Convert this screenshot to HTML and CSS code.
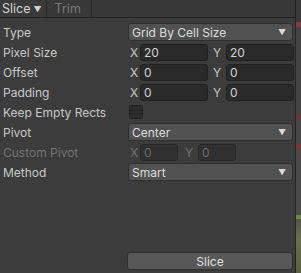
FILE: index.html
```html
<!DOCTYPE html>
<html>
<head>
<meta charset="utf-8">
<link rel="stylesheet" href="styles.css">
</head>
<body>
<div class="window">
  <div class="panel">
    <div class="toolbar">
      <div class="tab active">Slice <span class="caret">▼</span></div>
      <div class="tab disabled">Trim</div>
    </div>
    <div class="content">
      <div class="row">
        <div class="label">Type</div>
        <div class="dropdown"><span>Grid By Cell Size</span><span class="arrow">▼</span></div>
      </div>
      <div class="row">
        <div class="label">Pixel Size</div>
        <div class="vector">
          <span class="axis">X</span><div class="field">20</div>
          <span class="axis y">Y</span><div class="field">20</div>
        </div>
      </div>
      <div class="row">
        <div class="label">Offset</div>
        <div class="vector">
          <span class="axis">X</span><div class="field">0</div>
          <span class="axis y">Y</span><div class="field">0</div>
        </div>
      </div>
      <div class="row">
        <div class="label">Padding</div>
        <div class="vector">
          <span class="axis">X</span><div class="field">0</div>
          <span class="axis y">Y</span><div class="field">0</div>
        </div>
      </div>
      <div class="row">
        <div class="label">Keep Empty Rects</div>
        <div class="checkbox"></div>
      </div>
      <div class="row">
        <div class="label">Pivot</div>
        <div class="dropdown"><span>Center</span><span class="arrow">▼</span></div>
      </div>
      <div class="row disabled-row">
        <div class="label">Custom Pivot</div>
        <div class="vector small">
          <span class="axis">X</span><div class="field">0</div>
          <span class="axis y">Y</span><div class="field">0</div>
        </div>
      </div>
      <div class="row">
        <div class="label">Method</div>
        <div class="dropdown"><span>Smart</span><span class="arrow">▼</span></div>
      </div>
    </div>
    <div class="footer">
      <div class="button">Slice</div>
    </div>
  </div>
  <div class="strip"></div>
</div>
</body>
</html>
```

FILE: styles.css
```css
html, body {
  margin: 0;
  padding: 0;
}
body {
  width: 301px;
  height: 273px;
  overflow: hidden;
  background: #383838;
  font-family: Inter, "Noto Sans", sans-serif;
  font-size: 12px;
  color: #c8c8c8;
}
.window {
  display: flex;
  height: 273px;
}
.panel {
  width: 295px;
  display: flex;
  flex-direction: column;
  background: #3c3c3c;
  border-right: 1px solid #242424;
}
.toolbar {
  height: 17px;
  display: flex;
  background: #383838;
  border-bottom: 1px solid #232323;
}
.tab {
  display: flex;
  align-items: center;
  padding: 0 4px 0 2px;
  border-right: 1px solid #2a2a2a;
  font-size: 12.5px;
  color: #d2d2d2;
}
.tab.active {
  background: #3a3a3a;
}
.tab .caret {
  font-size: 8px;
  margin-left: 3px;
}
.tab.disabled {
  color: #7a7a7a;
  padding: 0 10px 0 8px;
}
.content {
  padding-top: 4px;
  display: flex;
  flex-direction: column;
}
.row {
  height: 20px;
  display: flex;
  align-items: center;
}
.label {
  width: 125px;
  padding-left: 3px;
  flex: none;
  white-space: nowrap;
}
.dropdown {
  width: 165px;
  height: 18px;
  box-sizing: border-box;
  display: flex;
  align-items: center;
  justify-content: space-between;
  padding: 0 6px 0 3px;
  background: #515151;
  border: 1px solid #303030;
  border-radius: 3px;
  color: #dedede;
}
.dropdown .arrow {
  font-size: 8px;
  color: #d8d8d8;
}
.vector {
  width: 166px;
  display: flex;
  align-items: center;
}
.axis {
  width: 12px;
  flex: none;
  padding-left: 2px;
  box-sizing: border-box;
}
.axis.y {
  width: 18px;
  padding-left: 5px;
}
.field {
  flex: 1;
  height: 17px;
  box-sizing: border-box;
  background: #2a2a2a;
  border: 1px solid #212121;
  border-radius: 3px;
  padding-left: 3px;
  line-height: 15px;
  color: #d2d2d2;
}
.vector.small {
  width: 110px;
}
.vector.small .field {
  flex: none;
  width: 38px;
}
.vector.small .axis.y {
  width: 20px;
  padding-left: 7px;
}
.disabled-row {
  color: #737373;
}
.disabled-row .field {
  color: #6a6a6a;
  background: #303030;
  border-color: #282828;
}
.checkbox {
  width: 14px;
  height: 14px;
  box-sizing: border-box;
  background: #2a2a2a;
  border: 1px solid #212121;
  border-radius: 2px;
  margin-left: 1px;
}
.footer {
  margin-top: auto;
  padding: 0 0 3px 127px;
}
.button {
  width: 166px;
  height: 18px;
  box-sizing: border-box;
  background: #585858;
  border: 1px solid #2f2f2f;
  border-radius: 3px;
  display: flex;
  align-items: center;
  justify-content: center;
  color: #e0e0e0;
}
.strip {
  flex: 1;
  background: linear-gradient(to bottom,
    #3a3a3a 0, #3a3a3a 22px,
    #8a3a3a 22px, #8a3a3a 27px,
    #444 27px, #444 115px,
    #7a3030 115px, #7a3030 119px,
    #474747 119px, #474747 145px,
    #8a3030 145px, #8a3030 149px,
    #4a4a4a 149px, #4a4a4a 215px,
    #6a8a40 215px, #6a8a40 219px,
    #55554c 219px, #6a7048 240px, #5a6040 273px);
}
```
